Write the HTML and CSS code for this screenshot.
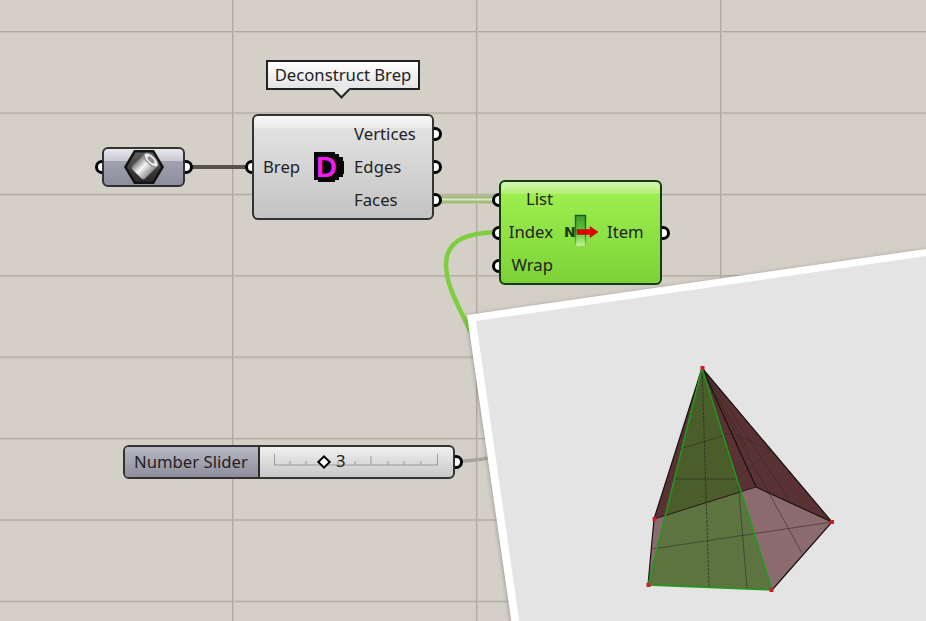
FILE: index.html
```html
<!DOCTYPE html>
<html>
<head>
  <title>Deconstruct Brep</title>
  <link rel="stylesheet" href="styles.css">
</head>
<body>
  <div class="canvas">
    <!-- wires -->
    <svg class="wires" width="926" height="621" viewBox="0 0 926 621">
      <path d="M188 167H248" class="wire-dark"/>
      <path d="M438 199.500H498" class="wire-list"/>
      <path d="M438 199.500H498" class="wire-list-inner"/>
      <path d="M498 232C470 233 446 238 446 265C446 285 458 305 472 335" class="wire-green"/>
      <path d="M458 461C470 461 480 460 492 457" class="wire-grey"/>
    </svg>

    <!-- brep param -->
    <div class="node param">
      <span class="port port-in port-mid"></span>
      <svg class="hex" width="42" height="36" viewBox="0 0 42 36">
        <defs>
          <linearGradient id="tube" x1="0" y1="0" x2="1" y2="0">
            <stop offset="0" stop-color="#7c7c7c"/>
            <stop offset="0.45" stop-color="#f6f6f6"/>
            <stop offset="1" stop-color="#8e8e8e"/>
          </linearGradient>
          <linearGradient id="hexfill" x1="0" y1="0" x2="0" y2="1">
            <stop offset="0" stop-color="#5c5c5c"/>
            <stop offset="1" stop-color="#2a2a2a"/>
          </linearGradient>
        </defs>
        <polygon points="11,1 31,1 41,18 31,35 11,35 1,18" fill="#141414"/>
        <polygon points="12.500,3.500 29.500,3.500 38,18 29.500,32.500 12.500,32.500 4,18" fill="url(#hexfill)"/>
        <g transform="rotate(45 21 18)">
          <rect x="12" y="7" width="18" height="21" rx="3" fill="url(#tube)"/>
          <ellipse cx="21" cy="8" rx="9" ry="4.200" fill="#ececec" stroke="#808080" stroke-width="1"/>
          <ellipse cx="21" cy="8" rx="4.500" ry="2" fill="#8c8c8c"/>
        </g>
      </svg>
      <span class="port port-out port-mid"></span>
    </div>

    <!-- tooltip -->
    <div class="tip">Deconstruct Brep</div>

    <!-- deconstruct brep -->
    <div class="node comp dbrep">
      <span class="port port-in port-mid"></span>
      <div class="inputs"><span>Brep</span></div>
      <svg class="icon-d" width="32" height="32" viewBox="0 0 32 32">
        <polygon points="1,1 22,1 22,3 26,3 26,6 30,6 30,10 31,10 31,23 30,23 30,26 26,26 26,29 22,29 22,31 5,31 5,29 1,29" fill="#050505"/>
        <text x="3" y="26" class="d-letter">D</text>
      </svg>
      <div class="outputs">
        <span>Vertices</span>
        <span>Edges</span>
        <span>Faces</span>
      </div>
      <span class="port port-out port-a"></span>
      <span class="port port-out port-mid"></span>
      <span class="port port-out port-c"></span>
    </div>

    <!-- list item -->
    <div class="node comp green listitem">
      <span class="port port-in port-a"></span>
      <span class="port port-in port-mid"></span>
      <span class="port port-in port-c"></span>
      <div class="inputs">
        <span>List</span>
        <span>Index</span>
        <span>Wrap</span>
      </div>
      <div class="icon-item">
        <svg width="36" height="36" viewBox="0 0 36 36">
          <defs>
            <linearGradient id="bar" x1="0" y1="0" x2="0" y2="1">
              <stop offset="0" stop-color="#3f9a28"/>
              <stop offset="0.5" stop-color="#5cc236"/>
              <stop offset="1" stop-color="#c8f59a"/>
            </linearGradient>
            <linearGradient id="barline" x1="0" y1="0" x2="0" y2="1">
              <stop offset="0" stop-color="#1b5214"/>
              <stop offset="0.6" stop-color="#2d7a20"/>
              <stop offset="1" stop-color="#8fd660"/>
            </linearGradient>
          </defs>
          <text x="1" y="23" class="n-letter">N</text>
          <rect x="12.500" y="1.500" width="10" height="31" fill="url(#bar)" stroke="url(#barline)" stroke-width="1.400"/>
          <path d="M14 15.500H27V12.500L35 18L27 23.500V20.500H14Z" fill="#e40000" stroke="#8c1a10" stroke-width="0.500"/>
        </svg>
      </div>
      <div class="outputs"><span>Item</span></div>
      <span class="port port-out port-mid"></span>
    </div>

    <!-- slider -->
    <div class="node slider">
      <div class="slider-name">Number Slider</div>
      <div class="slider-track">
        <svg class="rail" width="166" height="14" viewBox="0 0 166 14">
          <path d="M1.500 1V12H164.500V1M17 8V12M33 8V12M49 8V12M65 8V12M82 8V12M98 3V12M115 8V12M131 8V12M148 8V12" fill="none" stroke="#9a9a9a" stroke-width="1"/>
        </svg>
        <span class="grip"></span>
        <span class="value">3</span>
      </div>
      <span class="port port-out port-mid"></span>
    </div>

    <!-- viewport screenshot lying on top -->
    <svg class="shot" width="926" height="621" viewBox="0 0 926 621">
      <polygon points="467,315 940,247 940,640 514,640" fill="#ffffff" class="shot-frame"/>
      <polygon points="476,321 940,254 940,640 522,640" fill="#e4e4e4"/>

      <g class="pyramid">
        <polygon points="654,519 648,585 772,590 832,522 756,487" fill="#8b6b6d"/>
        <polygon points="702,368 832,522 756,487 654,519" fill="#5a3233"/>
        <polygon points="702,368 648,585 772,590" fill="#3f7a25" fill-opacity="0.6"/>

        <g class="mesh">
          <path d="M702 368L709 587" class="dash"/>
          <path d="M702 368L738 479L747 589"/>
          <path d="M652 549L832 522"/>
          <path d="M675 479H737L770 450" class="dash"/>
          <path d="M680 449L732 433L770 450"/>
          <path d="M702 368C728 420 750 460 770 495L802 553"/>
          <path d="M702 368L790 501"/>
          <path d="M702 368L748 450"/>
        </g>

        <path d="M654 519L702 368L832 522L772 590M654 519L648 585M756 487L832 522M702 368L756 487" class="edge"/>
        <path d="M654 519L756 487" class="edge-thin"/>
        <path d="M702 368L648 585L772 590Z" class="edge-green"/>

        <g class="verts">
          <rect x="700.500" y="366" width="4" height="4"/>
          <rect x="652.500" y="517" width="4" height="4"/>
          <rect x="646.500" y="583" width="4" height="4"/>
          <rect x="769.500" y="588" width="4" height="4"/>
          <rect x="830" y="520" width="4" height="4"/>
        </g>
      </g>
    </svg>
  </div>
</body>
</html>
```

FILE: styles.css
```css
html, body {
  margin: 0;
  padding: 0;
  overflow: hidden;
}

.canvas {
  position: relative;
  z-index: 0;
  width: 926px;
  height: 621px;
  overflow: hidden;
  font-family: "Noto Sans", sans-serif;
  font-size: 16.7px;
  color: #222;
  background-color: #d4d0c8;
  background-image:
    linear-gradient(to right, #aeaaa1 1px, #c6c2ba 1px, #c6c2ba 2px, transparent 2px),
    linear-gradient(to bottom, #aeaaa1 1px, #c6c2ba 1px, #c6c2ba 2px, transparent 2px);
  background-size: 244px 100%, 100% 81.4px;
  background-position: -12px 0, 0 31px;
}

/* wires */
.wires {
  position: absolute;
  left: 0;
  top: 0;
  z-index: -2;
}

.wires path {
  fill: none;
}

.wire-dark {
  stroke: #55524b;
  stroke-width: 4;
}

.wire-list {
  stroke: #a3bd7c;
  stroke-width: 8;
}

.wire-list-inner {
  stroke: #dfe4c8;
  stroke-width: 2;
}

.wire-green {
  stroke: #7fce3f;
  stroke-width: 4.5;
}

.wire-grey {
  stroke: #a8a499;
  stroke-width: 3.5;
}

/* nodes */
.node {
  position: absolute;
  box-sizing: border-box;
  border: 2px solid #333;
  border-radius: 6px;
}

.comp {
  display: flex;
  background:
    linear-gradient(to bottom, #f8f8f8, #e9e9e9) top / 100% 12px no-repeat,
    linear-gradient(to bottom, #e6e6e6, #c3c3c3);
}

.comp.green {
  border-color: #143c0c;
  background:
    linear-gradient(to bottom, #d6f7b4, #b0f070) top / 100% 12px no-repeat,
    linear-gradient(to bottom, #a0f24f, #7cd238);
}

.inputs, .outputs {
  display: flex;
  flex-direction: column;
  justify-content: center;
  gap: 11px;
  line-height: 22px;
}

.inputs {
  align-items: flex-end;
}

.outputs {
  align-items: flex-start;
}

.port {
  position: absolute;
  z-index: -1;
  box-sizing: border-box;
  width: 14px;
  height: 14px;
  margin-top: -7px;
  border: 3.5px solid #000;
  border-radius: 50%;
  background: #fff;
}

.port-in {
  left: -9px;
}

.port-out {
  right: -10px;
}

.port-mid {
  top: 50%;
}

.port-a {
  top: calc(50% - 33px);
}

.port-c {
  top: calc(50% + 33px);
}

.param {
  left: 102px;
  top: 147px;
  width: 83px;
  height: 40px;
  display: flex;
  align-items: center;
  justify-content: center;
  background:
    linear-gradient(to bottom, #e8e8ec, #c9c9d2) top / 100% 12px no-repeat,
    linear-gradient(to bottom, #aaa9b6, #8f8e9e);
}

.dbrep {
  left: 252px;
  top: 114px;
  width: 182px;
  height: 106px;
  align-items: center;
  padding-left: 9px;
}

.icon-d {
  margin: 0 9px 0 13px;
}

.d-letter {
  font-family: "Liberation Sans", sans-serif;
  font-weight: 700;
  font-size: 29px;
  fill: #f01cf0;
}

.listitem {
  left: 499px;
  top: 180px;
  width: 163px;
  height: 105px;
  align-items: center;
  padding-left: 10px;
  padding-bottom: 2px;
}

.listitem .inputs {
  width: 42px;
}

.icon-item {
  display: flex;
  margin: 0 8px 0 10px;
}

.n-letter {
  font-family: "DejaVu Sans", sans-serif;
  font-weight: 700;
  font-size: 14px;
  fill: #1d3a12;
}

/* tooltip */
.tip {
  position: absolute;
  left: 266px;
  top: 60px;
  box-sizing: border-box;
  width: 154px;
  height: 30px;
  border: 2px solid #222;
  line-height: 26px;
  text-align: center;
  background: linear-gradient(to bottom, #ffffff, #e4e4e4);
}

.tip::after {
  content: "";
  position: absolute;
  left: 67px;
  top: 21px;
  width: 11px;
  height: 11px;
  border-right: 2px solid #222;
  border-bottom: 2px solid #222;
  background: #e8e8e8;
  transform: rotate(45deg);
}

/* slider */
.slider {
  left: 123px;
  top: 445px;
  width: 332px;
  height: 34px;
  display: flex;
  background: linear-gradient(to bottom, #f0f0f0, #c8c8c8);
}

.slider-name {
  flex: 0 0 135px;
  box-sizing: border-box;
  border-right: 2px solid #2c2c2c;
  border-radius: 4px 0 0 4px;
  padding-left: 9px;
  line-height: 29px;
  background: linear-gradient(to bottom, #b8b8c4, #8e8d9c);
}

.slider-track {
  position: relative;
  flex: 1;
}

.rail {
  position: absolute;
  left: 13px;
  top: 6px;
}

.grip {
  position: absolute;
  left: 59px;
  top: 10px;
  box-sizing: border-box;
  width: 10px;
  height: 10px;
  border: 2px solid #000;
  background: #fff;
  transform: rotate(45deg);
}

.value {
  position: absolute;
  left: 75px;
  top: 3px;
  line-height: 22px;
  padding: 0 1px;
}

/* screenshot on top */
.shot {
  position: absolute;
  left: 0;
  top: 0;
}

.shot-frame {
  filter: drop-shadow(0 1px 2px rgba(60, 55, 45, 0.45));
}

.pyramid {
  filter: blur(0.35px);
}

.mesh path {
  fill: none;
  stroke: #2a2a22;
  stroke-opacity: 0.55;
  stroke-width: 1;
}

.mesh .dash {
  stroke-dasharray: 3 1;
  stroke-opacity: 0.7;
}

.edge {
  fill: none;
  stroke: #1a0f0f;
  stroke-width: 1.2;
}

.edge-thin {
  fill: none;
  stroke: #2a1515;
  stroke-width: 1;
}

.edge-green {
  fill: none;
  stroke: #1f9a1f;
  stroke-width: 1.5;
}

.verts rect {
  fill: #c81e2a;
}
```
